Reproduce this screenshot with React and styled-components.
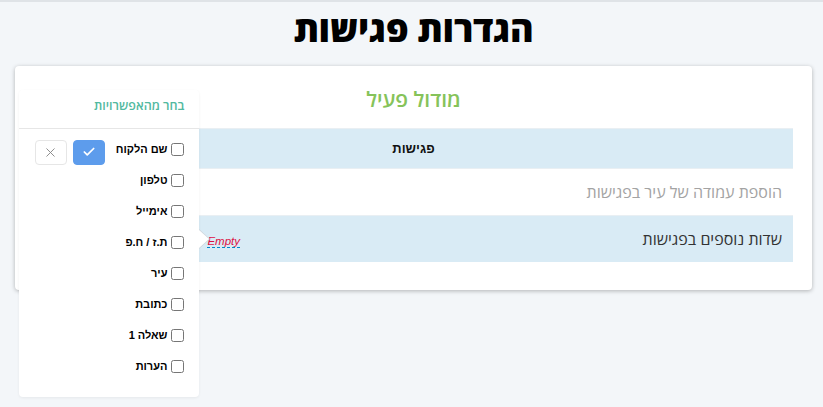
import styled, { createGlobalStyle } from 'styled-components'
import { Check, X } from 'lucide-react'

const GlobalStyle = createGlobalStyle`
    html, body {
        margin: 0;
        padding: 0;
        background: #f3f6f9;
    }
    body {
        font-family: "Open Sans", "Liberation Sans", sans-serif;
        border-top: 2px solid #dfe3e7;
    }
`

const Page = styled.div`
    direction: rtl;
    min-height: 405px;
    padding: 4px 11px 0 15px;
    box-sizing: border-box;
`

const Title = styled.h1`
    margin: 0;
    text-align: center;
    font-size: 36px;
    line-height: 46px;
    font-weight: 800;
    color: #000;
    letter-spacing: -0.3px;
`

const Card = styled.div`
    margin-top: 14px;
    background: #fff;
    border-radius: 4px;
    box-shadow: 0 1px 4px rgba(0, 0, 0, 0.28);
    padding: 19px 19px 30px;
    height: 224px;
    box-sizing: border-box;
`

const Table = styled.table`
    width: 100%;
    border-collapse: collapse;
`

const HeadCell = styled.th`
    height: 43px;
    padding: 0 0 14px;
    box-sizing: border-box;
    text-align: center;
    font-size: 21px;
    font-weight: 600;
    color: #86c35a;
`

const Row = styled.tr`
    background: ${(p) => (p.$tone === 'blue' ? '#d9ebf5' : '#fff')};
    border-top: 1px solid #e9eff3;
`

const GroupCell = styled.td`
    height: 39px;
    padding: 0;
    text-align: center;
    font-family: "Liberation Sans", sans-serif;
    font-size: 13px;
    font-weight: 700;
    color: #111;
`

const LabelCell = styled.td`
    width: 50%;
    height: 46px;
    padding: 0 11px;
    text-align: right;
    font-size: 16px;
    color: ${(p) => (p.$muted ? '#a3a3a3' : '#333')};
`

const ValueCell = styled.td`
    width: 50%;
    padding: 0;
    text-align: center;
`

const Editable = styled.span`
    position: relative;
    display: inline-block;
`

const EmptyLink = styled.a`
    font-family: "Liberation Sans", sans-serif;
    font-size: 11.5px;
    font-style: italic;
    color: #dd1144;
    border-bottom: 1px dashed #0088cc;
    text-decoration: none;
    cursor: pointer;
`

const Popover = styled.div`
    position: absolute;
    top: -138px;
    right: calc(100% + 8px);
    width: 180px;
    background: #fff;
    border-radius: 4px;
    box-shadow: 0 1px 3px rgba(0, 0, 0, 0.06);
    text-align: right;
    z-index: 10;

    &::before,
    &::after {
        content: '';
        position: absolute;
        left: 100%;
        border-style: solid;
        border-color: transparent;
    }
    &::before {
        top: 139px;
        border-width: 10px 0 10px 11px;
        border-left-color: #cfd6dc;
    }
    &::after {
        top: 140px;
        border-width: 9px 0 9px 10px;
        border-left-color: #fff;
    }
`

const PopoverTitle = styled.div`
    height: 39px;
    padding: 0 15px 14px;
    box-sizing: border-box;
    border-bottom: 1px solid #e6e6e6;
    display: flex;
    align-items: flex-end;
    font-size: 12.5px;
    font-weight: 600;
    color: #52b9a0;
`

const PopoverBody = styled.div`
    display: flex;
    align-items: flex-start;
    gap: 11px;
    padding: 5px 15px 15px;
`

const CheckList = styled.div`
    display: flex;
    flex-direction: column;
`

const CheckItem = styled.label`
    height: 31px;
    display: flex;
    align-items: center;
    gap: 4px;
    font-family: "Liberation Sans", sans-serif;
    font-size: 11px;
    font-weight: 700;
    color: #000;
    white-space: nowrap;

    input {
        margin: 0;
        width: 13px;
        height: 13px;
    }
`

const Buttons = styled.div`
    display: flex;
    gap: 6px;
    margin-top: 6px;
`

const Button = styled.button`
    width: 32px;
    height: 25px;
    padding: 0;
    display: flex;
    align-items: center;
    justify-content: center;
    border-radius: 4px;
    cursor: pointer;
    border: 1px solid ${(p) => (p.$primary ? '#5d9cec' : '#e6e6e6')};
    background: ${(p) => (p.$primary ? '#5d9cec' : '#fff')};
    color: ${(p) => (p.$primary ? '#fff' : '#888')};
`

const options = ['שם הלקוח', 'טלפון', 'אימייל', 'ת.ז / ח.פ', 'עיר', 'כתובת', 'שאלה 1', 'הערות']

const App = () => {
    return (
        <>
            <GlobalStyle />
            <Page>
                <Title>הגדרות פגישות</Title>
                <Card>
                    <Table>
                        <thead>
                            <tr>
                                <HeadCell colSpan={2}>מודול פעיל</HeadCell>
                            </tr>
                        </thead>
                        <tbody>
                            <Row $tone="blue">
                                <GroupCell colSpan={2}>פגישות</GroupCell>
                            </Row>
                            <Row>
                                <LabelCell $muted>הוספת עמודה של עיר בפגישות</LabelCell>
                                <ValueCell />
                            </Row>
                            <Row $tone="blue">
                                <LabelCell>שדות נוספים בפגישות</LabelCell>
                                <ValueCell>
                                    <Editable>
                                        <EmptyLink>Empty</EmptyLink>
                                        <Popover>
                                            <PopoverTitle>בחר מהאפשרויות</PopoverTitle>
                                            <PopoverBody>
                                                <CheckList>
                                                    {options.map((o) => (
                                                        <CheckItem key={o}>
                                                            <input type="checkbox" />
                                                            <span>{o}</span>
                                                        </CheckItem>
                                                    ))}
                                                </CheckList>
                                                <Buttons>
                                                    <Button $primary>
                                                        <Check size={14} strokeWidth={3} />
                                                    </Button>
                                                    <Button>
                                                        <X size={15} strokeWidth={1.5} />
                                                    </Button>
                                                </Buttons>
                                            </PopoverBody>
                                        </Popover>
                                    </Editable>
                                </ValueCell>
                            </Row>
                        </tbody>
                    </Table>
                </Card>
            </Page>
        </>
    )
}

export default App
